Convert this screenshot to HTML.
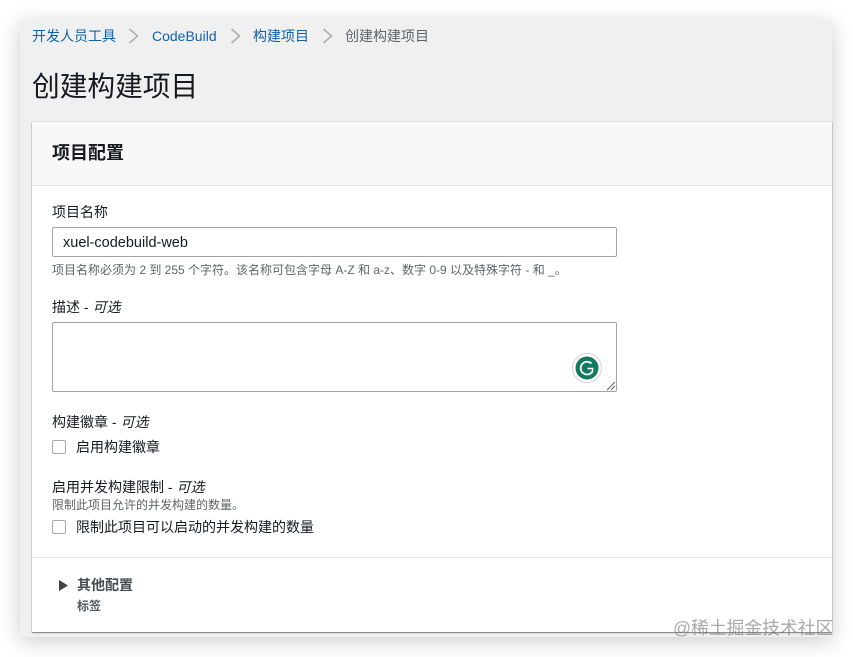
<!DOCTYPE html>
<html lang="zh">
<head>
<meta charset="utf-8">
<style>
html,body{margin:0;padding:0;background:#fff;}
body{width:853px;height:657px;overflow:hidden;position:relative;font-family:"Liberation Sans","Noto Sans CJK SC",sans-serif;color:#16191f;filter:blur(.3px);}
.t{position:absolute;white-space:nowrap;line-height:20px;}
#win{position:absolute;left:20px;top:20px;width:812px;height:617px;background:#f0f0f0;box-shadow:0 4px 20px rgba(0,0,0,.2);}
#panel{position:absolute;left:32px;top:122px;width:800px;height:510px;background:#fff;box-shadow:0 1px 1px rgba(0,0,0,.45),0 0 1px rgba(0,0,0,.35);}
#phead{position:absolute;left:32px;top:122px;width:800px;height:63px;background:#f8f8f8;border-bottom:1px solid #e4e4e4;}
.link{color:#0f62a8;font-size:14px;}
.box{position:absolute;background:#fff;border:1px solid #a0a4a8;border-radius:2px;box-sizing:border-box;}
.cb{position:absolute;width:12px;height:12px;border:1px solid #a8abae;border-radius:2px;background:#fff;}
.hint{font-size:12px;color:#5f6368;}
.lab{font-size:14px;color:#16191f;}
i{font-style:italic;}
</style>
</head>
<body>
<div id="win"></div>
<div class="t link" style="left:32px;top:26px;">开发人员工具</div>
<svg style="position:absolute;left:128px;top:28px" width="12" height="16"><path d="M1.5 1L9.5 8L1.5 15" fill="none" stroke="#adadad" stroke-width="1.5"/></svg>
<div class="t link" style="left:152px;top:26px;">CodeBuild</div>
<svg style="position:absolute;left:229.5px;top:28px" width="12" height="16"><path d="M1.5 1L9.5 8L1.5 15" fill="none" stroke="#adadad" stroke-width="1.5"/></svg>
<div class="t link" style="left:253px;top:26px;">构建项目</div>
<svg style="position:absolute;left:321.5px;top:28px" width="12" height="16"><path d="M1.5 1L9.5 8L1.5 15" fill="none" stroke="#adadad" stroke-width="1.5"/></svg>
<div class="t" style="left:345px;top:26px;font-size:14px;color:#5f6368;">创建构建项目</div>
<div class="t" style="left:32px;top:69px;font-size:27.7px;line-height:36px;color:#16191f;">创建构建项目</div>

<div id="panel"></div>
<div id="phead"></div>
<div class="t" style="left:52px;top:143px;font-size:18px;font-weight:bold;">项目配置</div>

<div class="t lab" style="left:52px;top:202px;">项目名称</div>
<div class="box" style="left:52px;top:227px;width:565px;height:30px;"></div>
<div class="t" style="left:63px;top:234px;font-size:14.5px;line-height:18px;">xuel-codebuild-web</div>
<div class="t hint" style="left:52px;top:260px;">项目名称必须为 2 到 255 个字符。该名称可包含字母 A-Z 和 a-z、数字 0-9 以及特殊字符 - 和 _。</div>

<div class="t lab" style="left:52px;top:297px;">描述 - <i>可选</i></div>
<div class="box" style="left:52px;top:322px;width:565px;height:70px;"></div>
<svg style="position:absolute;left:571px;top:352px" width="32" height="32" viewBox="0 0 32 32">
<circle cx="16" cy="16" r="14.5" fill="#fff" stroke="#d4d4d8" stroke-width="1"/>
<circle cx="16" cy="16" r="11.5" fill="#15795f"/>
<path d="M20.5 11.5A6.4 6.4 0 1 0 21.5 19.5" fill="none" stroke="#fff" stroke-width="1.8"/>
<path d="M16.5 16.5H21.5V20.5" fill="none" stroke="#fff" stroke-width="1.5"/>
</svg>
<svg style="position:absolute;left:606px;top:381px" width="10" height="10"><path d="M1 9L9 1M5 9L9 5" stroke="#666" stroke-width="1" fill="none"/></svg>

<div class="t lab" style="left:52px;top:412px;">构建徽章 - <i>可选</i></div>
<div class="cb" style="left:52px;top:440px;"></div>
<div class="t lab" style="left:76px;top:437px;">启用构建徽章</div>

<div class="t lab" style="left:52px;top:477px;">启用并发构建限制 - <i>可选</i></div>
<div class="t hint" style="left:52px;top:495px;">限制此项目允许的并发构建的数量。</div>
<div class="cb" style="left:52px;top:520px;"></div>
<div class="t lab" style="left:76px;top:517px;">限制此项目可以启动的并发构建的数量</div>

<div style="position:absolute;left:32px;top:557px;width:800px;height:1px;background:#e2e2e2;"></div>
<svg style="position:absolute;left:59px;top:580px" width="9" height="11"><path d="M0 0L9 5.5L0 11Z" fill="#444"/></svg>
<div class="t" style="left:77px;top:575px;font-size:14px;font-weight:bold;color:#444b52;">其他配置</div>
<div class="t" style="left:77px;top:596px;font-size:12px;font-weight:bold;color:#555b61;">标签</div>

<div class="t" style="left:673px;top:617px;font-size:17.8px;line-height:22px;color:rgba(110,110,110,.6);">@稀土掘金技术社区</div>
</body>
</html>
